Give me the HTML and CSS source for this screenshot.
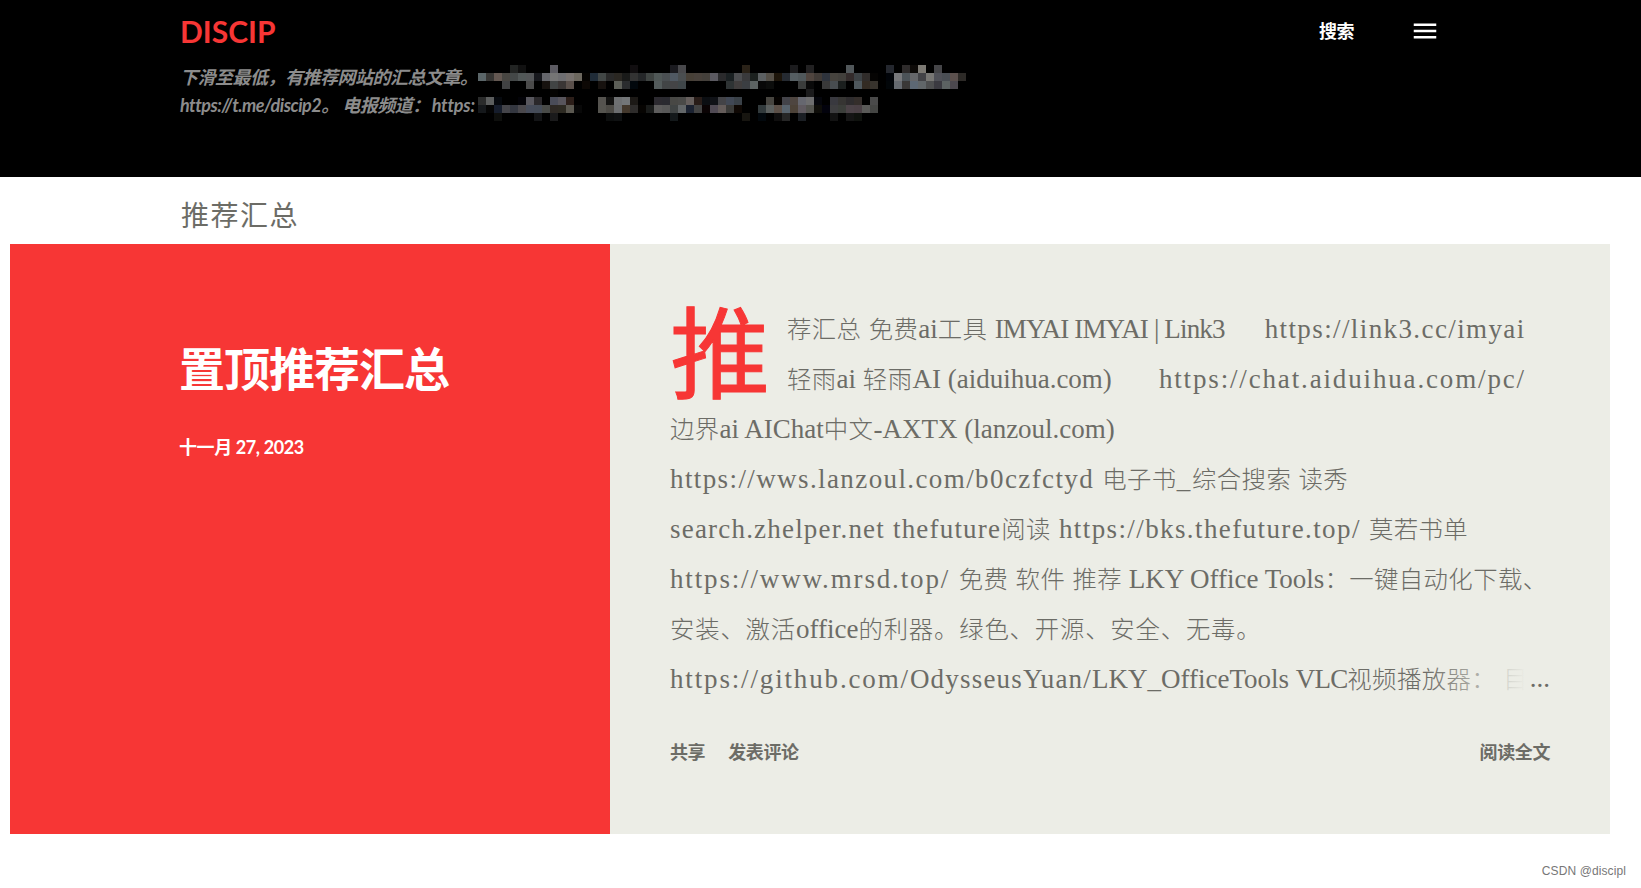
FILE: index.html
```html
<!DOCTYPE html>
<html lang="zh-CN">
<head>
  <meta charset="UTF-8"/>
  <meta name="viewport" content="width=device-width, initial-scale=1.0"/>
  <title>DISCIP</title>
  <link rel="stylesheet" href="styles.css">
</head>
<body>
  <header class="header">
    <div class="header-info">
      <h1>DISCIP</h1>
      <div class="description">
        <p>下滑至最低，有推荐网站的汇总文章。</p>
        <p>https://t.me/discip2。 电报频道：<span class="channel">https:</span></p>
        <svg class="mosaic" id="mosaic" width="504" height="56" shape-rendering="crispEdges"></svg>
      </div>
    </div>
    <nav class="header-nav">
      <a class="search">搜索</a>
      <svg class="menu" width="30" height="30" viewBox="0 0 24 24" fill="#fff"><path d="M3 18h18v-2H3v2zm0-5h18v-2H3v2zm0-7v2h18V6H3z"/></svg>
    </nav>
  </header>

  <h2 class="page-title">推荐汇总</h2>

  <article class="post">
    <div class="post-left">
      <h3>置顶推荐汇总</h3>
      <time>十一月 27, 2023</time>
    </div>
    <div class="post-right">
      <div class="snippet">
        <div class="dropcap">推</div>
        <p>荐汇总 免费<span class="en">ai</span>工具 <span class="en caps">IMYAI IMYAI | Link3</span><span class="en url gap1">https://link3.cc/imyai</span></p>
        <p>轻雨<span class="en">ai </span>轻雨<span class="en">AI (aiduihua.com)</span><span class="en long-url gap2">https://chat.aiduihua.com/pc/</span></p>
        <p>边界<span class="en">ai AIChat</span>中文<span class="en">-AXTX (lanzoul.com)</span></p>
        <p><span class="en url">https://wws.lanzoul.com/b0czfctyd </span>电子书<span class="en long-url">_</span>综合搜索 读秀</p>
        <p><span class="en host">search.zhelper.net thefuture</span>阅读<span class="en url"> https://bks.thefuture.top/ </span>莫若书单</p>
        <p><span class="en long-url">https://www.mrsd.top/ </span>免费 软件 推荐<span class="en"> LKY Office Tools</span>：一键自动化下载、</p>
        <p class="wide">安装、激活<span class="en">office</span>的利器。绿色、开源、安全、无毒。</p>
        <p class="last"><span class="en long-url">https://github.com/</span><span class="en host">OdysseusYuan/</span><span class="en">LKY_OfficeTools </span><span class="en caps">VLC</span>视频播放器： 目<span class="fade"></span><span class="dots">...</span></p>
      </div>
      <div class="post-footer">
        <a>共享</a>
        <a>发表评论</a>
        <a class="read-more">阅读全文</a>
      </div>
    </div>
  </article>

  <footer class="watermark">CSDN @discipl</footer>

  <script src="mosaic.js"></script>
</body>
</html>
```
FILE: mosaic.js
```js
// each row: column:colour, blocks are 8px
const rows = [
  "6:222423 7:111111 11:5c5b62 21:110e10 26:1b1b20 27:48484b 35:2a2218 41:1c1c1e 43:222122 48:51575a 53:24272e 55:2e2b2b 56:0d0a08 57:7c7973 59:454548",
  "2:5b6669 3:373634 4:645852 5:484642 6:444848 7:525858 8:545658 9:17181d 10:65666b 11:757575 12:6e6e71 13:77716e 14:6c675e 15:050301 16:202c38 17:424746 18:292929 19:2a2722 20:191a19 21:333333 22:252729 23:3f4442 24:505857 25:4a4f52 26:505963 27:4a4e50 28:474037 29:48413b 30:44403b 31:5b5a61 32:2a2a2c 33:1a2022 34:4c4d50 35:3a3a3c 36:1c211f 37:5c6062 38:544f47 39:1d150a 40:252a31 41:555e62 42:50585b 43:50453f 44:403a36 45:2e333c 46:46433e 47:42403c 48:332b2b 49:3d4245 50:302c2a 51:050403 53:010409 54:77787b 55:4c5358 56:66676a 57:434347 58:787774 59:505158 60:4a4e54 61:5c514e 62:2d2a27",
  "5:414243 8:4b4b4b 10:17120f 11:414444 12:3a3635 13:5a504b 15:0d0805 17:17120f 19:5c5e57 20:2a2c2e 21:02080d 24:535b5b 25:424546 26:444446 27:3f4649 33:2e3334 34:403d3d 35:3b3e42 36:5c6362 37:080808 38:0c0d0c 42:3b3d3c 43:0a0a0a 45:393939 46:484d50 47:1b1f1e 49:4e575c 50:332b23 51:37332d 53:020609 54:656a70 55:3a3837 56:5d6874 57:616669 58:4e4f50 59:3b3a41 60:5c6262 61:4c484e",
  "11:050402 43:1b1b1c",
  "2:2a2b2b 3:5c5e5e 4:06090e 7:030308 8:58575e 9:2a282b 11:4a4c58 12:58555c 13:2c1e19 17:55534f 18:131312 19:6e7072 20:737678 21:1c1916 24:2c2a30 25:2a2a30 26:484845 27:4a4a48 28:665f5d 29:281c18 30:0b0e12 31:101217 32:434347 33:414855 34:3a4148 38:474540 39:060301 40:434349 41:4e4540 42:66676f 43:6e6e6f 44:05060c 46:39393f 47:363533 48:2e2c2e 49:342e2b 51:4a4a4a",
  "2:15181b 3:050505 4:161d2c 5:444449 6:343740 7:4a484c 8:464c5a 9:454c58 10:484a47 11:2d2823 12:2d2a22 13:5b5850 14:080808 17:55544f 18:4c4a45 19:6c6e70 20:43382c 21:2e2c2b 22:060402 23:191b1a 24:5d5c5c 25:585858 26:404444 27:626668 28:1b2231 29:424242 30:0a0304 31:504a54 32:645c5a 33:3a3a38 34:0f0804 37:323a3c 38:5b5f5e 39:5c5048 40:58636d 41:4c4238 42:605a60 43:54544f 44:0e0d09 45:02020c 46:3e3e40 47:3b3e3a 48:4c4348 49:4b4146 50:5a5a58 51:444543",
  "4:0e0f0d 9:131416 11:1a1a1b 18:0c0e0e 19:0f1112 26:13181a 35:171510 37:02080d 39:0f0e0e 40:262626 42:1b1f24 46:121212 48:151515 49:0f120e"
];

const svg = document.getElementById("mosaic");
rows.forEach((row, y) => {
  row.split(" ").forEach(cell => {
    const [x, color] = cell.split(":");
    const rect = document.createElementNS("http://www.w3.org/2000/svg", "rect");
    rect.setAttribute("x", x * 8);
    rect.setAttribute("y", y * 8);
    rect.setAttribute("width", 8);
    rect.setAttribute("height", 8);
    rect.setAttribute("fill", "#" + color);
    svg.appendChild(rect);
  });
});
```
FILE: styles.css
```css
* {
  box-sizing: border-box;
  padding: 0;
  margin: 0;
}

body {
  font-family: Lato, 'Noto Sans CJK SC', sans-serif;
  background: #fff;
  color: #6c6c66;
  height: 888px;
  overflow: hidden;
}

.header {
  background: #000;
  height: 177px;
  padding: 0 201px 0 180px;
  display: flex;
  justify-content: space-between;
}

.header h1 {
  font-size: 30px;
  line-height: 36px;
  font-weight: 700;
  color: #f73635;
  padding-top: 13px;
  height: 63px;
}

.description {
  position: relative;
  color: #8c8c8c;
  font-size: 18px;
  font-weight: 700;
  font-style: italic;
  letter-spacing: -0.5px;
  line-height: 28px;
}

.description p {
  white-space: nowrap;
  height: 28px;
}

.channel {
  margin-left: 2px;
  letter-spacing: -0.2px;
}

.mosaic {
  position: absolute;
  left: 282px;
  top: 2px;
}

.header-nav {
  display: flex;
  align-items: flex-start;
  gap: 56px;
  padding-top: 16px;
}

.search {
  color: #fff;
  font-size: 18px;
  font-weight: 700;
  line-height: 30px;
  letter-spacing: -0.5px;
}

.page-title {
  height: 67px;
  padding-left: 181px;
  font-size: 28px;
  font-weight: 400;
  line-height: 76px;
  letter-spacing: 1.5px;
}

.post {
  display: flex;
  width: 1600px;
  height: 590px;
  margin-left: 10px;
}

.post-left {
  width: 600px;
  background: #f73635;
  color: #fff;
  padding: 90px 0 0 169px;
}

.post-left h3 {
  font-size: 46px;
  line-height: 70px;
  letter-spacing: -1px;
}

.post-left time {
  display: block;
  margin-top: 29px;
  font-size: 18px;
  font-weight: 700;
  line-height: 28px;
  letter-spacing: -0.4px;
}

.post-right {
  width: 1000px;
  background: #ecede6;
  padding: 59px 60px 0;
}

.snippet {
  height: 400px;
  font-family: 'Noto Sans CJK SC', sans-serif;
  font-weight: 300;
  font-size: 24.4px;
  line-height: 50px;
  letter-spacing: 0.4px;
  word-spacing: 1.5px;
}

.snippet p {
  height: 50px;
  white-space: nowrap;
}

.snippet .wide {
  letter-spacing: 0.8px;
}

.snippet .en {
  font-family: 'Liberation Serif', serif;
  font-size: 27px;
  letter-spacing: 0;
  word-spacing: 0;
}

.snippet .caps {
  letter-spacing: -0.85px;
}

.snippet .host {
  letter-spacing: 1.2px;
}

.snippet .url {
  letter-spacing: 1.4px;
}

.snippet .long-url {
  letter-spacing: 1.85px;
}

.dropcap {
  float: left;
  width: 117px;
  height: 100px;
  font-size: 100px;
  line-height: 90px;
  font-weight: 400;
  letter-spacing: 0;
  color: #f73635;
  -webkit-text-stroke: 1px #f73635;
}

.snippet .gap1 {
  margin-left: 40px;
}

.snippet .gap2 {
  margin-left: 47px;
}

.last {
  position: relative;
}

.fade {
  position: absolute;
  right: 24px;
  top: 0;
  width: 100px;
  height: 50px;
  background: linear-gradient(to right, rgba(236, 237, 230, 0), #ecede6);
}

.dots {
  position: absolute;
  right: 0;
  top: 0;
  padding-left: 4px;
  background: #ecede6;
  font-family: 'Liberation Serif', serif;
  font-size: 27px;
  letter-spacing: 0;
}

.post-footer {
  display: flex;
  gap: 23px;
  padding-top: 35px;
  font-size: 18px;
  font-weight: 700;
  line-height: 28px;
  letter-spacing: -0.4px;
}

.read-more {
  margin-left: auto;
}

.watermark {
  padding: 28px 15px 0 0;
  text-align: right;
  font-family: 'Liberation Sans', sans-serif;
  font-size: 12px;
  line-height: 18px;
  letter-spacing: 0.1px;
  color: #777;
}
```
